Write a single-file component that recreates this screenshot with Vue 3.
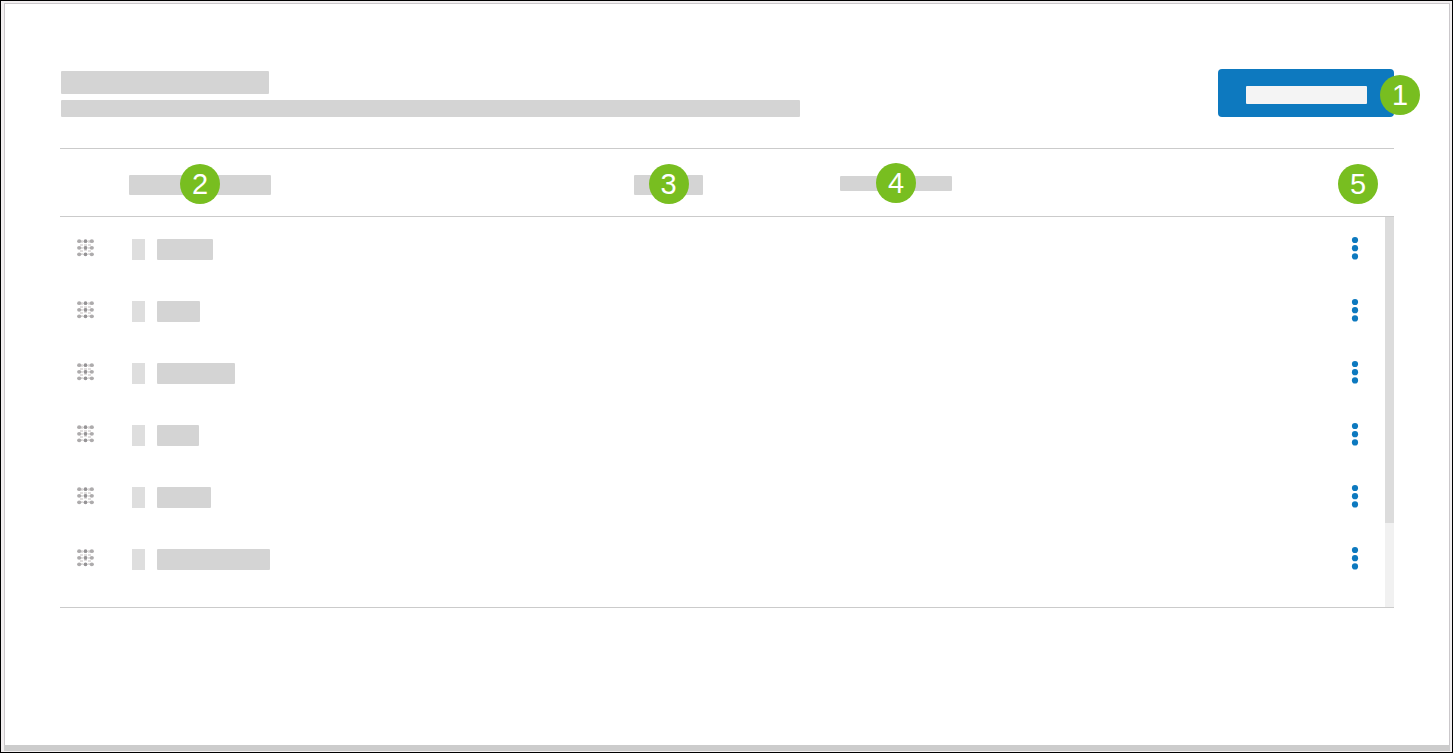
<template>
  <div class="window">
    <main class="page">
      <header class="page__header">
        <div class="page__intro">
          <div class="bar bar--title"></div>
          <div class="bar bar--description"></div>
        </div>
        <div class="page__action">
          <button class="button" type="button" aria-label="Add">
            <span class="button__label"></span>
          </button>
          <span class="badge badge--action">1</span>
        </div>
      </header>
      <div class="list">
        <table class="table">
          <thead>
            <tr>
              <th class="table__drag"></th>
              <th class="table__name">
                <div class="bar bar--name"><span class="badge">2</span></div>
              </th>
              <th class="table__type">
                <div class="bar bar--type"><span class="badge">3</span></div>
              </th>
              <th>
                <div class="bar bar--status"><span class="badge">4</span></div>
              </th>
              <th class="table__menu">
                <div class="anchor"><span class="badge">5</span></div>
              </th>
            </tr>
          </thead>
          <tbody>
            <tr v-for="row in rows" :key="row.id">
              <td class="table__drag">
                <svg class="handle" width="18" height="18" viewBox="0 0 18 18">
                  <g fill="#e2dfdf">
                    <rect x="4" y="1" width="2" height="3" />
                    <rect x="11" y="1" width="2" height="3" />
                    <rect x="3" y="5" width="3" height="2" />
                    <rect x="11" y="5" width="3" height="2" />
                    <rect x="3" y="11" width="3" height="2" />
                    <rect x="11" y="11" width="3" height="2" />
                    <rect x="7" y="5" width="3" height="7" />
                    <rect x="4" y="8" width="2" height="2" />
                    <rect x="11" y="8" width="2" height="2" />
                    <rect x="4" y="14" width="2" height="2" />
                    <rect x="11" y="14" width="2" height="2" />
                  </g>
                  <g fill="#adabac">
                    <ellipse cx="2.2" cy="2.2" rx="2.1" ry="1.9" />
                    <ellipse cx="14.8" cy="2.2" rx="2.1" ry="1.9" />
                    <ellipse cx="2.2" cy="8.8" rx="2.1" ry="1.9" />
                    <ellipse cx="14.8" cy="8.8" rx="2.1" ry="1.9" />
                    <ellipse cx="2.2" cy="15.3" rx="2.1" ry="1.9" />
                    <ellipse cx="14.8" cy="15.3" rx="2.1" ry="1.9" />
                  </g>
                  <g fill="#969496">
                    <circle cx="8.5" cy="2.2" r="1.9" />
                    <circle cx="8.5" cy="8.8" r="1.9" />
                    <circle cx="8.5" cy="15.3" r="1.9" />
                  </g>
                </svg>
              </td>
              <td colspan="3">
                <div class="item">
                  <span class="item__icon"></span>
                  <span class="bar item__name" :style="{width: row.width + 'px'}"></span>
                </div>
              </td>
              <td class="table__menu">
                <button class="menu" type="button" aria-label="More options">
                  <svg width="8" height="24" viewBox="0 0 8 24" fill="#0d79bf">
                    <circle cx="4" cy="4" r="3.1" />
                    <circle cx="4" cy="12.2" r="3.1" />
                    <circle cx="4" cy="20.4" r="3.1" />
                  </svg>
                </button>
              </td>
            </tr>
          </tbody>
        </table>
        <div class="scrollbar">
          <div class="scrollbar__thumb"></div>
        </div>
      </div>
    </main>
    <footer class="window__footer"></footer>
  </div>
</template>
<script setup>
  import {ref} from 'vue';

  const rows = ref([
    {id: 1, width: 56},
    {id: 2, width: 43},
    {id: 3, width: 78},
    {id: 4, width: 42},
    {id: 5, width: 54},
    {id: 6, width: 113},
  ]);
</script>
<style>
  body {
    margin: 0;
    background: #f2eff0;
  }
</style>
<style scoped>
  * {
    box-sizing: border-box;
  }

  .window {
    display: flex;
    flex-direction: column;
    min-height: 100vh;
    padding: 2px 2px 1px 3px;
    border: 1px solid #000;
    background: #f2eff0;
    font-family: 'Liberation Sans', Arial, sans-serif;
  }

  .page {
    flex: 1;
    padding: 65px 55px 0;
    border: 1px solid #cbc8cb;
    border-bottom: 0;
    background: #fff;
  }

  .window__footer {
    height: 6px;
    background: #ccc;
  }

  .page__header {
    display: flex;
    justify-content: space-between;
    padding-bottom: 31px;
    border-bottom: 1px solid #cbcbcb;
  }

  .page__intro {
    display: flex;
    flex: 1;
    flex-direction: column;
    gap: 6px;
    padding: 2px 24px 0 1px;
  }

  .page__action {
    position: relative;
  }

  .bar {
    position: relative;
    height: 20px;
    border-radius: 1px;
    background: #d4d4d4;
  }

  .bar--title {
    width: 208px;
    height: 23px;
  }

  .bar--description {
    width: 100%;
    max-width: 739px;
    height: 17px;
  }

  .bar--name {
    width: 142px;
  }

  .bar--type {
    width: 69px;
  }

  .bar--status {
    width: 112px;
    height: 15px;
    margin-top: 1px;
  }

  .button {
    display: block;
    width: 176px;
    height: 48px;
    padding: 4px 0 0 28px;
    border: 0;
    border-radius: 4px;
    background: #0d79bf;
    cursor: pointer;
  }

  .button__label {
    display: block;
    width: 121px;
    height: 18px;
    border-radius: 1px;
    background: #f4f4f4;
  }

  .badge {
    position: absolute;
    top: -11px;
    left: calc(50% - 20px);
    width: 40px;
    height: 40px;
    border-radius: 50%;
    background: #78be20;
    color: #fff;
    font-size: 29px;
    font-weight: 400;
    line-height: 40px;
    text-align: center;
  }

  .bar--status .badge {
    top: -13px;
  }

  .badge--action {
    top: 6px;
    right: -26px;
    left: auto;
  }

  .list {
    position: relative;
    padding-bottom: 18px;
    border-bottom: 1px solid #cbcbcb;
  }

  .table {
    width: 100%;
    border-collapse: separate;
    border-spacing: 0;
    table-layout: fixed;
  }

  .table th {
    height: 68px;
    padding: 26px 0 0;
    border-bottom: 1px solid #cbcbcb;
    vertical-align: top;
  }

  .table td {
    height: 62px;
    padding: 0;
    vertical-align: middle;
  }

  .table__drag {
    width: 69px;
  }

  .table__name {
    width: 505px;
  }

  .table__type {
    width: 206px;
  }

  .table__menu {
    width: 76px;
  }

  .anchor {
    position: relative;
    width: 80px;
    height: 20px;
  }

  .handle {
    display: block;
    margin-left: 17px;
  }

  .item {
    display: flex;
    gap: 12px;
    padding: 3px 0 0 3px;
  }

  .item__icon {
    width: 13px;
    height: 21px;
    background: #dedede;
  }

  .item__name {
    height: 21px;
  }

  .menu {
    display: block;
    margin-left: 33px;
    padding: 0;
    border: 0;
    background: none;
    cursor: pointer;
  }

  .menu svg {
    display: block;
  }

  .scrollbar {
    position: absolute;
    top: 68px;
    right: 0;
    bottom: 0;
    width: 9px;
    background: #f1f1f1;
  }

  .scrollbar__thumb {
    height: 306px;
    background: #dcdcdc;
  }
</style>
